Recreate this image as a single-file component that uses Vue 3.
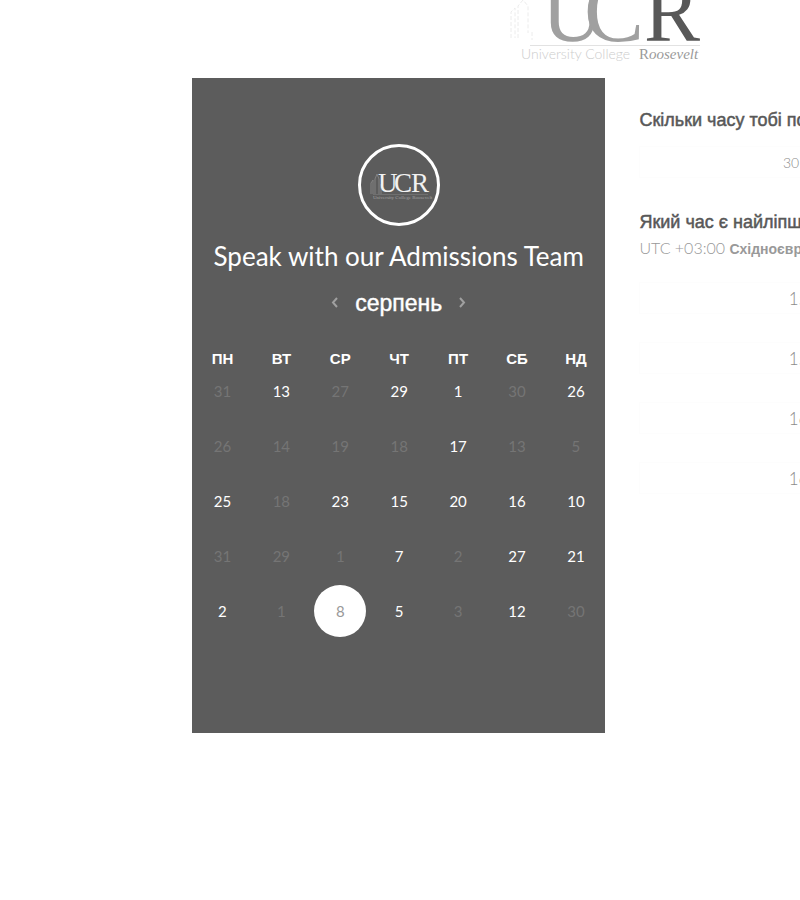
<script setup>
import { ref } from 'vue'

const weekdays = ['ПН', 'ВТ', 'СР', 'ЧТ', 'ПТ', 'СБ', 'НД']

// Negative entries are days that cannot be booked.
const weeks = [
  [-31, 13, -27, 29, 1, -30, 26],
  [-26, -14, -19, -18, 17, -13, -5],
  [25, -18, 23, 15, 20, 16, 10],
  [-31, -29, -1, 7, -2, 27, 21],
  [2, -1, 8, 5, -3, 12, -30],
]
const selected = ref(8)
const slots = ['15:15', '15:30', '16:00', '16:15']
</script>

<template>
  <div class="page">
    <header class="top">
      <svg class="logo" viewBox="0 0 220 78" role="img" aria-label="UCR University College Roosevelt">
        <g fill="none" stroke="#ececec" stroke-width="1" stroke-dasharray="4 2">
          <path d="M11 38V12l4-4v30M18 38V6l5-6 5 6v27M32 32v8" />
        </g>
        <path d="M30 45.500H200" stroke="#e2e2e2" />
        <text class="mark light" x="42" y="41">U</text>
        <text class="mark light wide" x="84" y="41">C</text>
        <text class="mark dark" x="144" y="41">R</text>
        <text class="college" x="21" y="59">University College</text>
        <text class="roosevelt" x="139" y="59"><tspan class="initial">R</tspan>oosevelt</text>
      </svg>
    </header>

    <main class="booking">
      <section class="panel">
        <div class="avatar">
          <svg viewBox="0 0 76 76" role="img" aria-label="UCR">
            <path d="M10 47V36l2-3v14M14 47V32l2-5 2 5v15M20 47V37" fill="none" stroke="#828282" />
            <path d="M12 47.500H67" stroke="#707070" />
            <text class="mini" x="17" y="45">U</text>
            <text class="mini" x="33" y="45">C</text>
            <text class="mini" x="50" y="45">R</text>
            <text class="tiny" x="12" y="52">University College Roosevelt</text>
          </svg>
        </div>
        <h1>Speak with our Admissions Team</h1>
        <div class="month">
          <button type="button" aria-label="Попередній місяць">
            <svg viewBox="0 0 8 12"><path d="M6 1 2 5.500 6 10" /></svg>
          </button>
          <h2>серпень</h2>
          <button type="button" aria-label="Наступний місяць">
            <svg viewBox="0 0 8 12"><path d="m2 1 4 4.500L2 10" /></svg>
          </button>
        </div>
        <div class="calendar">
          <table>
            <thead>
              <tr><th v-for="d in weekdays" :key="d" scope="col">{{ d }}</th></tr>
            </thead>
            <tbody>
              <tr v-for="(week, w) in weeks" :key="w">
                <td v-for="(day, i) in week" :key="i">
                  <button
                    type="button"
                    class="day"
                    :class="{ chosen: day === selected }"
                    :disabled="day < 0"
                    @click="selected = day"
                  >{{ Math.abs(day) }}</button>
                </td>
              </tr>
            </tbody>
          </table>
        </div>
      </section>

      <section class="options">
        <h3>Скільки часу тобі потрібно?</h3>
        <button type="button" class="option duration">30 хвилин</button>
        <h3>Який час є найліпшим?</h3>
        <p class="zone">UTC +03:00 <b>Східноєвропейський час</b></p>
        <div class="slots">
          <button v-for="s in slots" :key="s" type="button" class="option">{{ s }}</button>
        </div>
      </section>
    </main>
  </div>
</template>

<style>
body {
  background: #fff;
}
</style>

<style scoped>
.page {
  overflow-x: hidden;
  min-height: 100vh;
  font-family: Lato, "Liberation Sans", sans-serif;
}
h1, h2, h3, p {
  margin: 0;
  font-weight: 400;
}
button {
  padding: 0;
  border: 0;
  background: none;
  font-family: inherit;
  cursor: pointer;
}
.top {
  padding-left: 62.5%;
}
.logo {
  display: block;
  width: 220px;
  height: 78px;
}
.mark {
  font-family: "Liberation Serif", serif;
  font-size: 84px;
}
.wide { font-size: 90px; }
.light { fill: #a0a0a0; }
.dark { fill: #585858; }
.college {
  font-size: 14px;
  font-weight: 300;
  fill: #cccccc;
}
.roosevelt {
  font-family: "Liberation Serif", serif;
  font-size: 15px;
  font-style: italic;
  fill: #9a9a9a;
}
.initial { font-style: normal; }
.booking {
  display: flex;
  align-items: flex-start;
  gap: 34px;
  padding-left: 24%;
}
.panel {
  flex: 0 0 68%;
  box-sizing: border-box;
  padding: 66px 0 95px;
  background: #5c5c5c;
  color: #fff;
  text-align: center;
}
.avatar {
  box-sizing: border-box;
  width: 82px;
  height: 82px;
  margin: 0 auto;
  border: 3px solid #fff;
  border-radius: 50%;
}
.avatar svg {
  display: block;
}
.mini {
  font-family: "Liberation Serif", serif;
  font-size: 27px;
  fill: #f2f2f2;
}
.tiny {
  font-family: "Liberation Serif", serif;
  font-size: 5px;
  fill: #a0a0a0;
}
h1 {
  margin-top: 14px;
  font-size: 26px;
  line-height: 32px;
  white-space: nowrap;
}
.month {
  display: flex;
  justify-content: center;
  align-items: center;
  gap: 16px;
  margin-top: 17px;
}
.month h2 {
  font-family: "Liberation Sans", sans-serif;
  font-size: 23px;
  line-height: 28px;
  -webkit-text-stroke: 0.4px #fff;
}
.month button {
  width: 8px;
  height: 12px;
}
.month svg {
  display: block;
  fill: none;
  stroke: #a0a0a0;
  stroke-width: 2;
}
.calendar {
  margin-top: 38px;
  padding-left: 1px;
}
table {
  width: 100%;
  border-collapse: collapse;
  table-layout: fixed;
}
th {
  padding: 0;
  font: bold 15px/8px "Liberation Sans", sans-serif;
}
td {
  height: 55px;
  padding: 0;
}
.day {
  display: block;
  width: 52px;
  height: 52px;
  margin: 0 auto;
  border-radius: 50%;
  color: #fff;
  font-size: 15px;
}
.day:disabled {
  color: #757575;
  cursor: default;
}
.day.chosen {
  background: #fff;
  color: #999;
}
.options {
  flex: 0 0 352px;
  padding-top: 32px;
}
h3 {
  font: 18px/20px "Liberation Sans", sans-serif;
  color: #585858;
  -webkit-text-stroke: 0.5px #585858;
  white-space: nowrap;
}
.option {
  display: block;
  width: 100%;
  height: 32px;
  border: 1px solid #fdfdfd;
  color: #8c8c8c;
  font-size: 14px;
  font-weight: 300;
}
.duration {
  margin: 16px 0 34px;
}
.zone {
  margin-top: 6px;
  color: #999;
  font-size: 16px;
  font-weight: 300;
  line-height: 20px;
  white-space: nowrap;
}
.zone b {
  font: bold 14px/20px "Liberation Sans", sans-serif;
}
.slots {
  display: grid;
  gap: 28px;
  margin-top: 23px;
}
.slots .option {
  padding-right: 10px;
  font-size: 17px;
}
</style>
